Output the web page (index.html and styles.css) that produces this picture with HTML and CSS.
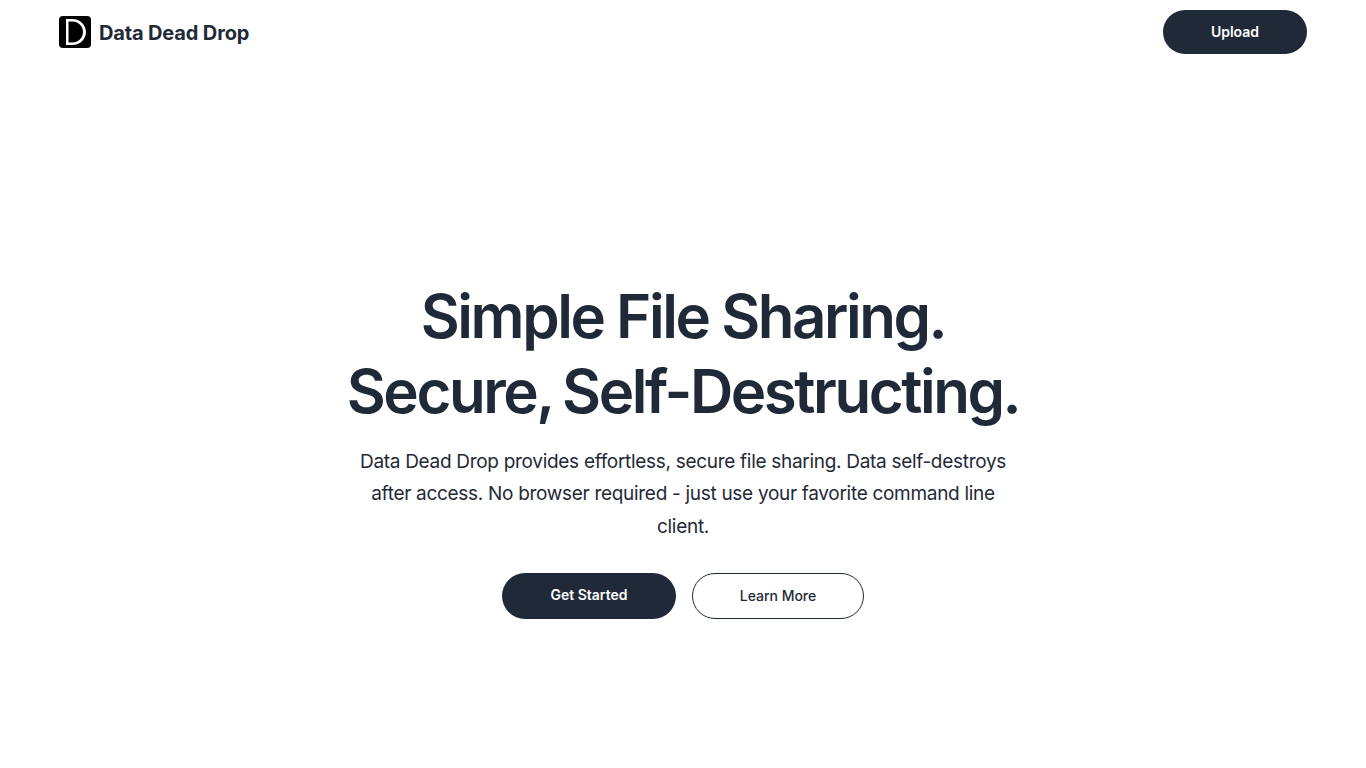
FILE: index.html
```html
<!DOCTYPE html>
<html lang="en">
<head>
  <meta charset="UTF-8">
  <meta name="viewport" content="width=device-width, initial-scale=1.0">
  <title>Data Dead Drop</title>
  <link rel="stylesheet" href="styles.css">
</head>
<body>
  <header class="navbar">
    <a class="brand" href="#">
      <svg class="brand-logo" viewBox="0 0 32 32" width="32" height="32">
        <rect width="32" height="32" rx="4" fill="#000"/>
        <path fill-rule="evenodd" d="M7 3h6.500c7.500 0 13.500 6 13.500 13s-6 13-13.500 13H7zM9.500 5.500v21h4c5.500 0 10.500-4.500 10.500-10.500S19 5.500 13.500 5.500z" fill="#fff"/>
      </svg>
      <span class="brand-name">Data Dead Drop</span>
    </a>
    <a class="btn btn-dark btn-upload" href="#">Upload</a>
  </header>

  <main class="hero">
    <h1>Simple File Sharing.<br>Secure<span class="comma">,</span> Self-Destructing.</h1>
    <p class="lead">Data Dead Drop provides effortless, secure file sharing. Data self-destroys after access. No browser required - just use your favorite command line client.</p>
    <div class="actions">
      <a class="btn btn-dark btn-start" href="#">Get Started</a>
      <a class="btn btn-outline" href="#">Learn More</a>
    </div>
  </main>
</body>
</html>
```

FILE: styles.css
```css
* {
  box-sizing: border-box;
}
body {
  margin: 0;
  min-height: 768px;
  background-color: #fff;
  color: #1f2937;
  font-family: Inter, "Liberation Sans", sans-serif;
}
a {
  text-decoration: none;
  color: inherit;
}
.navbar {
  display: flex;
  justify-content: space-between;
  align-items: center;
  padding: 10px 59px 0;
}
.brand {
  display: flex;
  align-items: center;
  gap: 8px;
}
.brand-logo {
  display: block;
}
.brand-name {
  font-size: 20px;
  font-weight: 700;
  letter-spacing: -0.15px;
  padding-top: 2px;
  color: #1f2937;
}
.btn {
  display: flex;
  align-items: center;
  justify-content: center;
  border-radius: 9999px;
  font-size: 14px;
}
.btn-dark {
  background-color: #1f2937;
  color: #fff;
  font-weight: 600;
  padding-bottom: 2px;
}
.btn-upload {
  width: 144px;
  height: 44px;
}
.hero {
  display: flex;
  flex-direction: column;
  align-items: center;
  padding-top: 225px;
  text-align: center;
}
h1 {
  margin: 0;
  font-size: 60px;
  line-height: 75px;
  font-weight: 640;
  letter-spacing: -2.45px;
}
.comma {
  letter-spacing: -6px;
}
.lead {
  width: 672px;
  margin: 16.8px 0 0;
  font-size: 19px;
  line-height: 32.5px;
  letter-spacing: -0.3px;
}
.actions {
  display: flex;
  gap: 16px;
  margin-top: 30px;
}
.btn-start {
  width: 174px;
  height: 46px;
  padding-bottom: 4px;
}
.btn-outline {
  width: 172px;
  height: 46px;
  padding-bottom: 2px;
  border: 1px solid #1f2937;
  font-weight: 500;
  letter-spacing: -0.03px;
}
```
